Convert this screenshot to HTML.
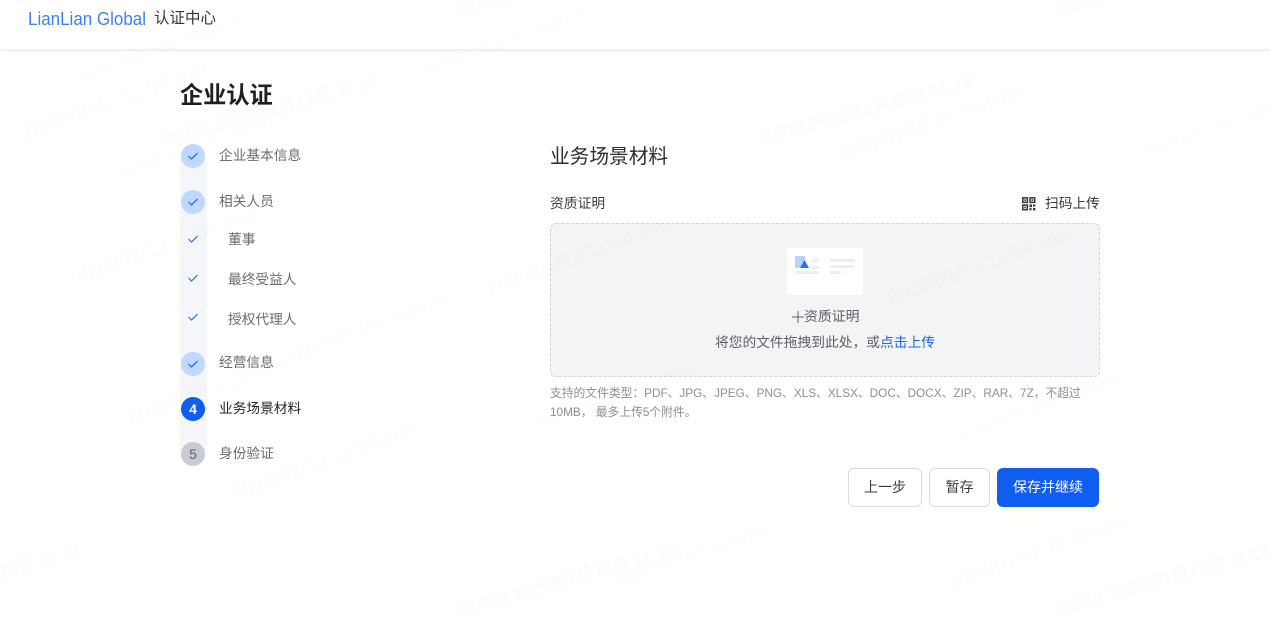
<!DOCTYPE html>
<html lang="zh-CN"><head><meta charset="utf-8"><title>认证中心</title>
<style>
*{box-sizing:border-box;margin:0;padding:0}
html,body{width:1271px;height:630px;overflow:hidden;background:#fffffd;font-family:"Liberation Sans","Noto Sans CJK SC",sans-serif}
.a{position:absolute;white-space:nowrap}
#hd{position:absolute;left:0;top:0;width:1271px;height:49px;background:#fff;box-shadow:0 1px 4px rgba(0,0,0,.12)}
.wm{position:absolute;left:0;top:0;pointer-events:none;z-index:5}
.c{position:absolute;left:181px;width:24px;height:24px;border-radius:50%;background:#bfd8ff;text-align:center;font-size:14px;line-height:24px}
.l{position:absolute;font-size:13.7px;line-height:20px;color:#686c73;white-space:nowrap}
.btn{position:absolute;top:468px;height:39px;border:1px solid #d9dbe0;border-radius:6px;background:#fff;color:#3a3d42;font-size:14px;line-height:37px;text-align:center}
</style></head><body>
<div id="hd"></div>
<svg class="a" style="left:0;top:0" width="160" height="40"><text x="28" y="25" font-family="Liberation Sans" font-size="18.5" fill="#3f7ff5" textLength="118" lengthAdjust="spacingAndGlyphs">LianLian Global</text></svg>
<div class="a" style="left:154px;top:8px;font-size:15.500px;line-height:22px;color:#33363b">认证中心</div>
<div class="a" style="left:180px;top:78px;font-size:23.200px;line-height:34px;font-weight:700;color:#1c1f24">企业认证</div>

<div class="a" style="left:180px;top:150px;width:27px;height:315px;background:#f5f6fa;border-radius:13px"></div>
<div class="c" style="top:144px"><svg width="24" height="24"><path d="M7.500 12l3 3 6-6" fill="none" stroke="#2d6bf0" stroke-width="1.300"/></svg></div>
<div class="l" style="left:219px;top:146px">企业基本信息</div>
<div class="c" style="top:190px"><svg width="24" height="24"><path d="M7.500 12l3 3 6-6" fill="none" stroke="#2d6bf0" stroke-width="1.300"/></svg></div>
<div class="l" style="left:219px;top:192px">相关人员</div>
<svg class="a" style="left:181px;top:227px" width="24" height="24"><path d="M7.500 12l3 3 6-6" fill="none" stroke="#2d6bf0" stroke-width="1.200"/></svg>
<div class="l" style="left:228px;top:230px">董事</div>
<svg class="a" style="left:181px;top:266px" width="24" height="24"><path d="M7.500 12l3 3 6-6" fill="none" stroke="#2d6bf0" stroke-width="1.200"/></svg>
<div class="l" style="left:228px;top:270px">最终受益人</div>
<svg class="a" style="left:181px;top:305px" width="24" height="24"><path d="M7.500 12l3 3 6-6" fill="none" stroke="#2d6bf0" stroke-width="1.200"/></svg>
<div class="l" style="left:228px;top:310px">授权代理人</div>
<div class="c" style="top:352px"><svg width="24" height="24"><path d="M7.500 12l3 3 6-6" fill="none" stroke="#2d6bf0" stroke-width="1.300"/></svg></div>
<div class="l" style="left:219px;top:353px">经营信息</div>
<div class="c" style="top:397px;background:#0f5ef0;color:#fff;font-weight:700">4</div>
<div class="l" style="left:219px;top:399px;color:#24272c">业务场景材料</div>
<div class="c" style="top:442px;background:#c8ccd2;color:#5f6368">5</div>
<div class="l" style="left:219px;top:444px">身份验证</div>

<div class="a" style="left:550px;top:142px;font-size:19.700px;line-height:30px;color:#2b2e33">业务场景材料</div>
<div class="a" style="left:550px;top:194px;font-size:13.800px;line-height:20px;color:#3c3f44">资质证明</div>
<svg class="a" style="left:1022px;top:197px" width="14" height="14"><g fill="none" stroke="#33363b" stroke-width="1.500"><rect x=".8" y=".8" width="4.600" height="4.600"/><rect x="8.100" y=".8" width="4.600" height="4.600"/><rect x=".8" y="8.100" width="4.600" height="4.600"/></g><g fill="#33363b"><rect x="2.300" y="2.300" width="1.600" height="1.600"/><rect x="9.600" y="2.300" width="1.600" height="1.600"/><rect x="2.300" y="9.600" width="1.600" height="1.600"/><rect x="7.500" y="7.500" width="2.600" height="2.600"/><rect x="11" y="7.500" width="2.400" height="2"/><rect x="7.500" y="11" width="2" height="2.400"/><rect x="11" y="11" width="2.400" height="2.400"/></g></svg>
<div class="a" style="left:1045px;top:194px;font-size:13.700px;line-height:20px;color:#33363b">扫码上传</div>

<div class="a" style="left:550px;top:223px;width:550px;height:154px;background:#f3f4f5;border:1px dashed #d2d4d8;border-radius:6px"></div>
<svg class="a" style="left:787px;top:248px" width="76" height="47"><rect width="76" height="47" rx="2" fill="#fff"/><rect x="8" y="8" width="10" height="12" fill="#b9d2ff"/><path d="M13 20l4.500-8 4.500 8z" fill="#2a6ff0"/><g fill="#edeef0"><rect x="25" y="11" width="7" height="3"/><rect x="25" y="18" width="7" height="3"/><rect x="8" y="23" width="24" height="3"/><rect x="43" y="11" width="25" height="3"/><rect x="43" y="17" width="24" height="3"/><rect x="43" y="23" width="11" height="3"/></g></svg>
<svg class="a" style="left:792px;top:311px" width="12" height="12"><path d="M0 6h12M6 0v12" stroke="#5d6167" stroke-width="1"/></svg>
<div class="a" style="left:804px;top:306px;font-size:13.900px;line-height:20px;color:#5d6167">资质证明</div>
<div class="a" style="left:550px;width:550px;top:333px;text-align:center;font-size:13.750px;line-height:20px;color:#5d6167">将您的文件拖拽到此处，或<span style="color:#1c66ef">点击上传</span></div>
<div class="a" style="left:550px;top:384px;width:550px;white-space:normal;font-size:11.780px;line-height:19px;color:#8b8f96">支持的文件类型：PDF、JPG、JPEG、PNG、XLS、XLSX、DOC、DOCX、ZIP、RAR、7Z，不超过<br>10MB， 最多上传5个附件。</div>

<div class="btn" style="left:848px;width:74px">上一步</div>
<div class="btn" style="left:929px;width:61px">暂存</div>
<div class="btn" style="left:997px;width:102px;background:#0f5ef0;border-color:#0f5ef0;color:#fff">保存并继续</div>

<svg class="wm" width="1271" height="630" font-family="Liberation Sans, Noto Sans CJK SC, sans-serif">
<g fill="#000" fill-opacity=".022" font-size="17.500">
<text transform="translate(165 145) rotate(-15.500)">00213 2026年1月12日 11:13</text>
<text transform="translate(760 145) rotate(-15.500)">00213 2026年1月12日 11:13</text>
<text transform="translate(463 15) rotate(-15.500)">00213 2026年1月12日 11:13</text>
<text transform="translate(1058 15) rotate(-15.500)">00213 2026年1月12日 11:13</text>
<text transform="translate(463 615) rotate(-15.500)">00213 2026年1月12日 11:13</text>
<text transform="translate(1058 615) rotate(-15.500)">00213 2026年1月12日 11:13</text>
<text transform="translate(-132 615) rotate(-15.500)">00213 2026年1月12日 11:13</text>
</g>
<g fill="#000" fill-opacity=".012" font-size="20">
<text transform="translate(25 140) rotate(-20)">2026/01/12 11:54-jinci</text>
<text transform="translate(838 163) rotate(-20)">2026/01/12 11:54-jinci</text>
<text transform="translate(75 285) rotate(-20)">2026/01/12 11:54-jinci</text>
<text transform="translate(890 305) rotate(-20)">2026/01/12 11:54-jinci</text>
<text transform="translate(130 425) rotate(-20)">2026/01/12 11:54-jinci</text>
<text transform="translate(950 590) rotate(-20)">2026/01/12 11:54-jinci</text>
<text transform="translate(235 500) rotate(-20)">2026/01/12 11:54-jinci</text>
<text transform="translate(490 295) rotate(-20)">2026/01/12 11:54-jinci</text>
</g>
<g fill="#000" fill-opacity=".012" font-size="14">
<text transform="translate(78 83) rotate(-20)">2026/01/08 18:57-xiangying</text>
<text transform="translate(123 178) rotate(-20)">2026/01/08 18:57-xiangying</text>
<text transform="translate(1140 160) rotate(-20)">2026/01/08 18:57-xiangying</text>
<text transform="translate(425 75) rotate(-20)">2026/01/08 18:57-xiangying</text>
<text transform="translate(610 590) rotate(-20)">2026/01/08 18:57-xiangying</text>
<text transform="translate(530 430) rotate(-20)">2026/01/08 18:57-xiangying</text>
<text transform="translate(960 440) rotate(-20)">2026/01/08 18:57-xiangying</text>
<text transform="translate(290 360) rotate(-20)">2026/01/08 18:57-xiangying</text>
</g>
</svg>
</body></html>
